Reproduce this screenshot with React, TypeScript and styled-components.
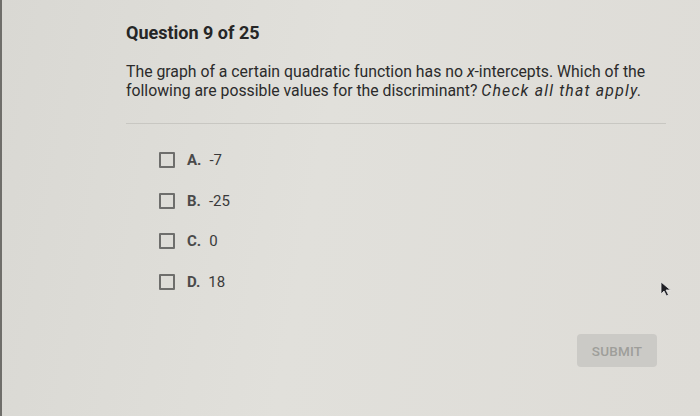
import styled, { createGlobalStyle } from "styled-components";

const GlobalStyle = createGlobalStyle`
  html, body {
    margin: 0;
    padding: 0;
  }
  body {
    font-family: Roboto, "Liberation Sans", Arial, sans-serif;
    color: #2b2b2b;
  }
`;

const options = [
  { letter: "A.", value: "-7" },
  { letter: "B.", value: "-25" },
  { letter: "C.", value: "0" },
  { letter: "D.", value: "18" },
];

export default function App() {
  return (
    <>
      <GlobalStyle />
      <Screen>
        <Content>
          <Title>Question 9 of 25</Title>
          <Prompt>
            The graph of a certain quadratic function has no <i>x</i>-intercepts. Which of the
            following are possible values for the discriminant? <em>Check all that apply.</em>
          </Prompt>
          <Divider />
          <OptionList>
            {options.map((o) => (
              <Option key={o.letter}>
                <Checkbox />
                <Letter>{o.letter}</Letter>
                <Value>{o.value}</Value>
              </Option>
            ))}
          </OptionList>
          <Footer>
            <SubmitButton disabled>SUBMIT</SubmitButton>
          </Footer>
        </Content>
        <Cursor width="12" height="16" viewBox="0 0 12 16">
          <path d="M1 1 L1 13 L4 10 L6.5 15 L8.5 14 L6 9 L10.5 9 Z" fill="#1f1f24" stroke="#e8e8e8" strokeWidth="0.8" />
        </Cursor>
      </Screen>
    </>
  );
}

const Screen = styled.div`
  position: relative;
  width: 700px;
  height: 416px;
  box-sizing: border-box;
  overflow: hidden;
  border-left: 2px solid #6f6e6a;
  background: linear-gradient(100deg, #d9d8d3 0%, #e1e0db 45%, #dedcd7 100%);
`;

const Content = styled.div`
  width: 540px;
  padding: 22px 0 0 124px;
  display: flex;
  flex-direction: column;
`;

const Title = styled.h1`
  margin: 0;
  font-size: 18px;
  font-weight: 700;
  line-height: 22px;
  color: #262626;
`;

const Prompt = styled.p`
  margin: 18px 0 0;
  font-size: 15.8px;
  line-height: 19px;
  color: #2b2b2b;

  em {
    font-style: italic;
    letter-spacing: 1.2px;
  }
`;

const Divider = styled.hr`
  margin: 23px 0 0;
  border: none;
  border-top: 1px solid #c8c7c2;
  width: 540px;
`;

const OptionList = styled.div`
  display: flex;
  flex-direction: column;
  gap: 18.7px;
  margin-top: 25px;
  padding-left: 33px;
`;

const Option = styled.label`
  display: flex;
  align-items: center;
  height: 22px;
  font-size: 15px;
`;

const Checkbox = styled.span`
  width: 12px;
  height: 12px;
  border: 2px solid #6e6e6c;
  border-radius: 1px;
  margin-right: 12px;
`;

const Letter = styled.span`
  font-weight: 700;
  color: #4a4a4a;
  margin-right: 8px;
`;

const Value = styled.span`
  color: #3a3a3a;
`;

const Footer = styled.div`
  display: flex;
  justify-content: flex-end;
  margin-top: 41px;
  margin-right: 9px;
`;

const SubmitButton = styled.button`
  width: 80px;
  height: 33px;
  border: none;
  border-radius: 4px;
  background: #cbcac6;
  color: #9e9e9a;
  font-family: Roboto, "Liberation Sans", Arial, sans-serif;
  font-size: 13.5px;
  font-weight: 500;
  letter-spacing: 0.2px;
`;

const Cursor = styled.svg`
  position: absolute;
  left: 658px;
  top: 281px;
`;
